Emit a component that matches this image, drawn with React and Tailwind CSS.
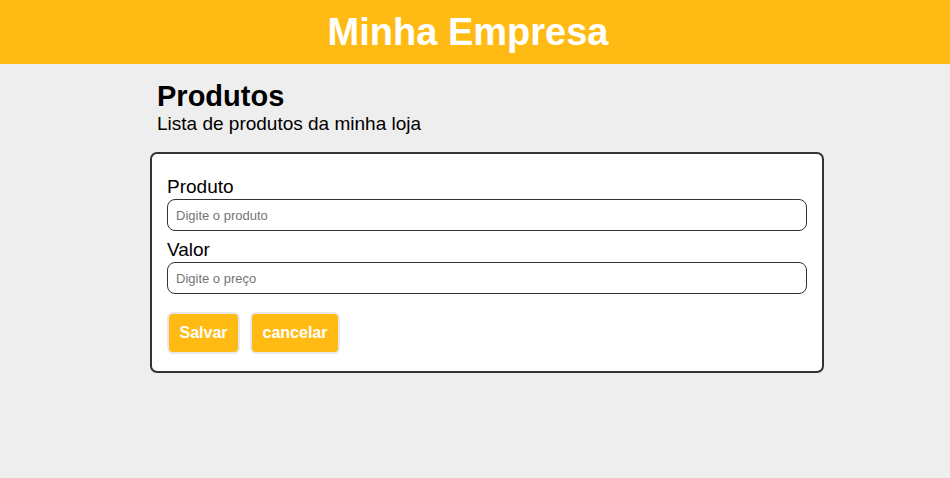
import React from "react";

const App = () => {
    return (
        <div className="min-h-[478px] bg-[#eeeeee] font-['Liberation_Sans',Arial,sans-serif] text-black">

            {/* Header */}
            <header className="h-16 bg-[#ffbb14] flex items-center justify-center pr-[14px]">
                <h1 className="text-[38px] font-bold text-white leading-none">Minha Empresa</h1>
            </header>

            {/* Content */}
            <main className="ml-[150px] w-[674px] pt-4">
                <div className="pl-[7px]">
                    <h2 className="text-[29px] font-bold leading-[32px]">Produtos</h2>
                    <p className="text-[19px] leading-[21px] mt-[1px]">Lista de produtos da minha loja</p>
                </div>

                {/* Form card */}
                <form className="mt-[18px] bg-white border-2 border-[#333333] rounded-[7px] pt-[22px] px-[15px] pb-[17px]">
                    <label className="block text-[19px] leading-[22px]">Produto</label>
                    <input
                        type="text"
                        placeholder="Digite o produto"
                        className="block w-full h-8 mt-[1px] border border-[#333333] rounded-lg px-2 text-[13px] placeholder:text-[#757575] outline-none"
                    />

                    <label className="block text-[19px] leading-[22px] mt-[8px]">Valor</label>
                    <input
                        type="text"
                        placeholder="Digite o preço"
                        className="block w-full h-8 mt-[1px] border border-[#333333] rounded-lg px-2 text-[13px] placeholder:text-[#757575] outline-none"
                    />

                    <div className="flex gap-[10px] mt-[18px]">
                        <button type="button" className="w-[73px] h-[42px] bg-[#ffbb14] border-2 border-[#e8e8e8] rounded-md text-white text-base font-bold">
                            Salvar
                        </button>
                        <button type="button" className="w-[90px] h-[42px] bg-[#ffbb14] border-2 border-[#e8e8e8] rounded-md text-white text-base font-bold">
                            cancelar
                        </button>
                    </div>
                </form>
            </main>
        </div>
    );
};

export default App;
